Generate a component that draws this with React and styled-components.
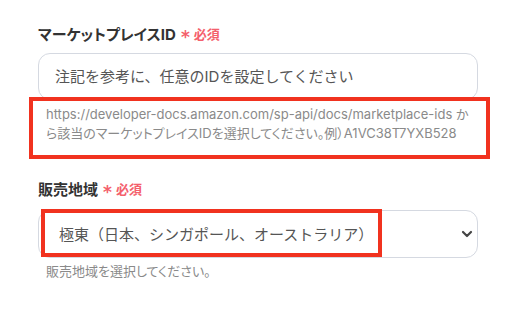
import React from 'react';
import styled, { createGlobalStyle } from 'styled-components';

const GlobalStyle = createGlobalStyle`
    body {
        margin: 0;
        background: #ffffff;
        font-family: Inter, "Noto Sans CJK JP", sans-serif;
    }
`;

const Form = styled.div`
    width: 440px;
    padding: 23px 0 0 38px;
    display: flex;
    flex-direction: column;
    gap: 35px;
`;

const Field = styled.div`
    display: flex;
    flex-direction: column;
`;

const Label = styled.div`
    display: flex;
    align-items: center;
    height: 20px;
    margin-bottom: ${props => props.gap}px;
    font-size: 15px;
    font-weight: 700;
    color: #333333;
    font-feature-settings: "palt";
`;

const Asterisk = styled.span`
    margin-left: 5px;
    font-family: "DejaVu Sans", sans-serif;
    font-size: 17px;
    font-weight: 700;
    color: #f4606c;
    position: relative;
    top: 4px;
`;

const Required = styled.span`
    margin-left: 4px;
    font-size: 13px;
    font-weight: 700;
    color: #f4606c;
`;

const Input = styled.input`
    box-sizing: border-box;
    width: 100%;
    height: 47px;
    padding: 0 16px;
    border: 1px solid #d5d9e1;
    border-radius: 12px;
    font-family: inherit;
    font-size: 15px;
    color: #333;
    outline: none;
    &::placeholder {
        color: #555555;
    }
`;

const SelectWrap = styled.div`
    position: relative;
`;

const Select = styled.select`
    box-sizing: border-box;
    width: 100%;
    height: 48px;
    padding: 0 20px;
    border: 1px solid #d5d9e1;
    border-radius: 12px;
    background: #fff;
    font-family: inherit;
    font-size: 15px;
    color: #555555;
    appearance: none;
    outline: none;
`;

const Chevron = styled.svg`
    position: absolute;
    right: 5px;
    top: 20px;
    pointer-events: none;
`;

const Help = styled.div`
    position: relative;
    margin-top: ${props => props.top}px;
    padding-left: 8px;
    font-size: 13px;
    line-height: 19px;
    color: #8a8a8a;
    font-feature-settings: "palt";
`;

const Marker = styled.div`
    position: absolute;
    box-sizing: border-box;
    border: 4px solid #f1321f;
    pointer-events: none;
    left: ${props => props.left}px;
    top: ${props => props.top}px;
    width: ${props => props.w}px;
    height: ${props => props.h}px;
`;

function App() {
    return (
        <>
            <GlobalStyle />
            <Form>
                <Field>
                    <Label gap={10}>
                        マーケットプレイスID<Asterisk>*</Asterisk><Required>必須</Required>
                    </Label>
                    <Input placeholder="注記を参考に、任意のIDを設定してください" />
                    <Help top={5}>
                        https://developer-docs.amazon.com/sp-api/docs/marketplace-ids から該当のマーケットプレイスIDを選択してください。例）A1VC38T7YXB528
                        <Marker left={-9} top={-8} w={461} h={62} />
                    </Help>
                </Field>
                <Field>
                    <Label gap={12}>
                        販売地域<Asterisk>*</Asterisk><Required>必須</Required>
                    </Label>
                    <SelectWrap>
                        <Select defaultValue="fe">
                            <option value="fe">極東（日本、シンガポール、オーストラリア）</option>
                        </Select>
                        <Chevron width="12" height="8" viewBox="0 0 12 8">
                            <path d="M2 2 L6 6 L10 2" fill="none" stroke="#444" strokeWidth="2.2" strokeLinecap="round" strokeLinejoin="round" />
                        </Chevron>
                        <Marker left={3} top={-1} w={341} h={48} />
                    </SelectWrap>
                    <Help top={4}>販売地域を選択してください。</Help>
                </Field>
            </Form>
        </>
    );
}

export default App;
